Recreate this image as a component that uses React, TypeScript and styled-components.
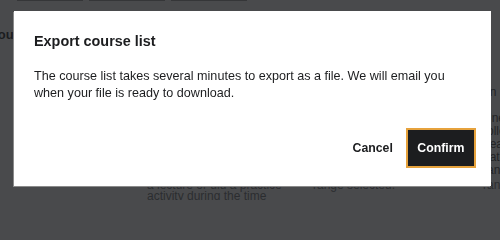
import React from "react";
import styled, { createGlobalStyle } from "styled-components";

const Global = createGlobalStyle`
  html, body { margin: 0; padding: 0; background: #ffffff; width: 500px; height: 200px; overflow: hidden; }
  body { font-family: "Liberation Sans", Arial, sans-serif; }
  * { box-sizing: border-box; }
`;

const Page = styled.div`
  width: 500px;
  height: 200px;
  overflow: hidden;
  display: grid;
  grid-template-columns: 147px 166px 170px 17px;
  grid-template-rows: 24px 60px 95px 21px;
  color: #6a6f73;
  font-size: 12px;
  line-height: 11px;
`;

const TabStrip = styled.div`
  grid-column: 1 / -1;
  display: flex;
  gap: 6px;
  align-items: flex-start;
  padding-left: 17px;
  overflow: hidden;
`;

const Tab = styled.div<{ $w: number }>`
  width: ${(p) => p.$w}px;
  height: 1px;
  background: #9a9a9a;
`;

const Heading = styled.div`
  grid-column: 1 / -1;
  margin-left: -10px;
  padding-top: 5px;
  font-weight: 700;
  font-size: 13px;
  color: #1c1d1f;
  overflow: hidden;
  white-space: nowrap;
`;

const Spacer = styled.div`
  grid-column: 1 / 4;
`;

const SideNote = styled.div`
  grid-column: 4;
  font-size: 12px;
  line-height: 13px;
  color: #3d3d3d;
  padding-top: 2px;
  overflow: hidden;
  white-space: nowrap;
`;

const Cell = styled.div<{ $col: number }>`
  grid-column: ${(p) => p.$col};
  padding-top: 1px;
  line-height: 11px;
  overflow: hidden;
  white-space: nowrap;
`;

const Overlay = styled.div`
  position: fixed;
  inset: 0;
  background: rgba(28, 29, 31, 0.8);
  padding: 11px 0 0 14px;
`;

const Modal = styled.div`
  width: 477px;
  height: 175px;
  background: #ffffff;
  padding: 21px 20px 20px 20px;
  display: flex;
  flex-direction: column;
  box-shadow: -1px 1px 0 #8a8a8a;
`;

const Title = styled.h2`
  margin: 0;
  font-size: 14.4px;
  line-height: 18px;
  font-weight: 700;
  color: #1c1d1f;
`;

const Body = styled.p`
  margin: 18px 0 0 0;
  font-size: 12.6px;
  line-height: 17px;
  color: #1c1d1f;
`;

const Footer = styled.div`
  margin-top: auto;
  margin-right: -3px;
  display: flex;
  justify-content: flex-end;
  align-items: center;
`;

const Button = styled.button<{ $primary?: boolean }>`
  height: 36px;
  border: none;
  font-family: "Liberation Sans", Arial, sans-serif;
  font-weight: 700;
  font-size: 12.3px;
  cursor: pointer;
  padding: ${(p) => (p.$primary ? "0 9.5px" : "0 15px")};
  background: ${(p) => (p.$primary ? "#1c1d1f" : "transparent")};
  color: ${(p) => (p.$primary ? "#ffffff" : "#1c1d1f")};
  outline: ${(p) => (p.$primary ? "2.5px solid #e6a23c" : "none")};
`;

export default function App() {
  return (
    <>
      <Global />
      <Page>
        <TabStrip>
          <Tab $w={66} />
          <Tab $w={76} />
          <Tab $w={76} />
        </TabStrip>
        <Heading>Your courses</Heading>
        <Spacer />
        <SideNote>
          nn
          <br />
          <br />
          Unen
          <br />
          rolled
          <br />
          Learne
          <br />
          date
          <br />
          rang
        </SideNote>
        <Cell $col={1} />
        <Cell $col={2}>
          a lecture or did a practice
          <br />
          activity during the time
        </Cell>
        <Cell $col={3}>range selected.</Cell>
        <Cell $col={4}>range</Cell>
      </Page>
      <Overlay>
        <Modal role="dialog" aria-labelledby="export-title">
          <Title id="export-title">Export course list</Title>
          <Body>
            The course list takes several minutes to export as a file. We will email you
            when your file is ready to download.
          </Body>
          <Footer>
            <Button>Cancel</Button>
            <Button $primary>Confirm</Button>
          </Footer>
        </Modal>
      </Overlay>
    </>
  );
}
